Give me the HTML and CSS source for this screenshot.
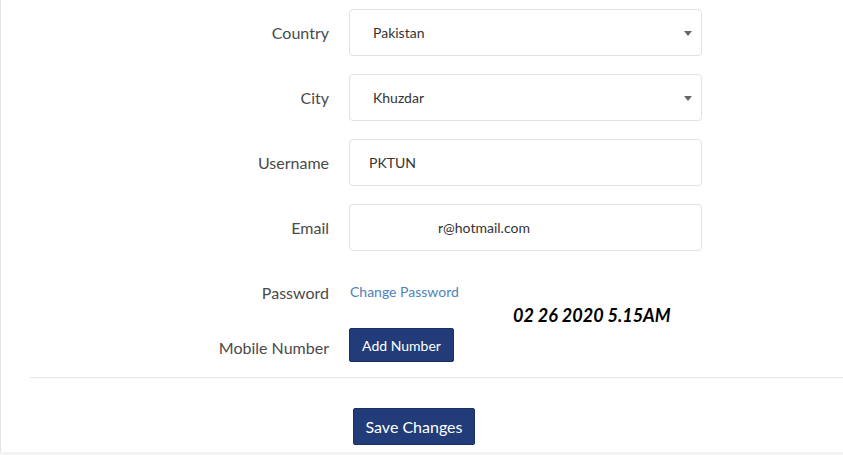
FILE: index.html
```html
<!DOCTYPE html>
<html>
<head>
<meta charset="utf-8">
<link rel="stylesheet" href="styles.css">
</head>
<body>
<div class="panel">
  <div class="form">
    <div class="row">
      <label class="label">Country</label>
      <div class="field select"><span>Pakistan</span><i class="caret"></i></div>
    </div>
    <div class="row">
      <label class="label">City</label>
      <div class="field select"><span>Khuzdar</span><i class="caret"></i></div>
    </div>
    <div class="row">
      <label class="label">Username</label>
      <div class="field text">PKTUN</div>
    </div>
    <div class="row">
      <label class="label">Email</label>
      <div class="field text"><span class="email">r@hotmail.com</span></div>
    </div>
    <div class="row plain">
      <label class="label">Password</label>
      <a class="link" href="#">Change Password</a>
    </div>
    <div class="row mobile">
      <label class="label">Mobile Number</label>
      <div><button class="btn small">Add Number</button></div>
    </div>
    <div class="stamp">02 26 2020 5.15AM</div>
  </div>
  <hr class="divider">
  <div class="footer">
    <button class="btn large">Save Changes</button>
  </div>
</div>
<div class="band"></div>
</body>
</html>
```
FILE: styles.css
```css
* { box-sizing: border-box; }
html, body { margin: 0; padding: 0; background: #fff; }
body { font-family: Lato, "Open Sans", sans-serif; color: #444; width: 843px; height: 455px; overflow: hidden; }
.panel { border-left: 1px solid #e3e3e3; height: 452px; padding-top: 9px; }
.form { position: relative; display: flex; flex-direction: column; gap: 18px; }
.row { display: grid; grid-template-columns: 328px 353px; column-gap: 20px; align-items: center; height: 47px; }
.label { text-align: right; font-size: 16px; color: #4a4a4a; }
.field { height: 47px; border: 1px solid #e2e2e2; border-radius: 4px; display: flex; align-items: center; font-size: 14px; color: #333; position: relative; }
.select { padding-left: 23px; }
.text { padding-left: 19px; }
.email { padding-left: 69px; }
.caret { position: absolute; right: 9px; top: 21px; width: 0; height: 0; border-left: 4px solid transparent; border-right: 4px solid transparent; border-top: 5px solid #666; }
.row.plain { height: 47px; }
.link { color: #4e82b8; text-decoration: none; font-size: 14px; margin-left: 1px; position: relative; top: -1px; }
.row.mobile { height: 34px; margin-top: -6px; }
.row.mobile .label { position: relative; top: 2px; }
.btn { font-family: Lato, sans-serif; background: #213c78; color: #fff; border: 1px solid #1a3166; border-radius: 2px; cursor: pointer; }
.btn.small { height: 34px; width: 105px; font-size: 14px; padding: 0; }
.btn.large { height: 37px; width: 122px; font-size: 16px; padding: 0; }
.stamp { position: absolute; left: 512px; top: 295px; font-size: 18px; font-weight: 700; font-style: italic; color: #000; }
.divider { margin: 15px 0 0 29px; border: 0; border-top: 1px solid #e6e6e6; height: 0; }
.footer { padding: 30px 0 0 352px; }
.band { height: 3px; background: #f2f3f5; }
```
